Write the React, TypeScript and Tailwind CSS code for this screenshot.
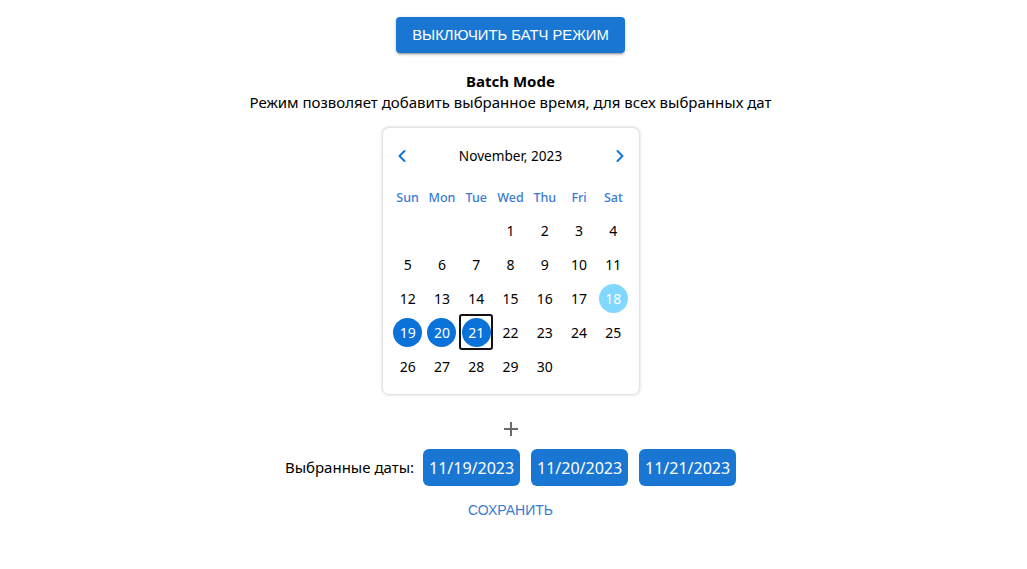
import { ChevronLeft, ChevronRight } from "lucide-react"

const weekDays = ["Sun", "Mon", "Tue", "Wed", "Thu", "Fri", "Sat"]
const selected = [19, 20, 21]
const picked = ["11/19/2023", "11/20/2023", "11/21/2023"]

const App = () => {
  // November 2023 starts on Wednesday
  const cells: (number | null)[] = [null, null, null]
  for (let d = 1; d <= 30; d++) cells.push(d)

  return (
    <div className="min-h-screen bg-white flex flex-col items-center pt-[17px] pr-[6px] text-black" style={{ fontFamily: '"Noto Sans", sans-serif' }}>
      <button
        type="button"
        className="h-9 px-4 rounded bg-[#1976d2] text-white text-[14.8px] uppercase shadow-[0_3px_1px_-2px_rgba(0,0,0,0.2),0_2px_2px_0_rgba(0,0,0,0.14),0_1px_5px_0_rgba(0,0,0,0.12)]"
        style={{ fontFamily: '"Liberation Sans", Arial, sans-serif' }}
      >
        Выключить батч режим
      </button>

      <h2 className="mt-[18px] text-[15px] font-bold leading-5">Batch Mode</h2>
      <p className="text-[15px] leading-5 mt-[1px]">Режим позволяет добавить выбранное время, для всех выбранных дат</p>

      <div className="mt-[16px] w-[256px] h-[266px] rounded-md bg-white shadow-[0_0_3px_1px_rgba(0,0,0,0.18)] px-[8px] pt-[18px]">
        <div className="flex items-center justify-between px-[1px] h-5">
          <ChevronLeft className="w-5 h-5 text-[#1976d2]" strokeWidth={2.5} />
          <span className="text-[13.6px]">November, 2023</span>
          <ChevronRight className="w-5 h-5 text-[#1976d2]" strokeWidth={2.5} />
        </div>

        <div className="grid grid-cols-7 mt-[22px]">
          {weekDays.map((w) => (
            <div key={w} className="h-5 flex items-center justify-center text-[12.5px] font-medium text-[#3a7bd5]">
              {w}
            </div>
          ))}
        </div>

        <div className="grid grid-cols-7 mt-[5px]">
          {cells.map((d, i) => (
            <div key={i} className="h-[34px] flex items-center justify-center">
              {d === null ? null : (
                <div
                  className={
                    d === 21
                      ? "w-9 h-9 rounded-[3px] border-2 border-[#111] flex items-center justify-center"
                      : "w-9 h-9 flex items-center justify-center"
                  }
                >
                  <span
                    className={
                      selected.includes(d)
                        ? "w-[29px] h-[29px] rounded-full bg-[#0b72d9] text-white flex items-center justify-center text-[14px]"
                        : d === 18
                        ? "w-[29px] h-[29px] rounded-full bg-[#80d8ff] text-white flex items-center justify-center text-[14px]"
                        : "text-[14px]"
                    }
                  >
                    {d}
                  </span>
                </div>
              )}
            </div>
          ))}
        </div>
      </div>

      <svg className="mt-[27px]" width="16" height="16" viewBox="0 0 16 16">
        <path d="M8 1v14M1 8h14" stroke="#6b6b6b" strokeWidth="2" />
      </svg>

      <div className="flex items-center mt-[12px]">
        <span className="text-[15px] mr-[9px]">Выбранные даты:</span>
        <div className="flex gap-[11px]">
          {picked.map((p) => (
            <span key={p} className="h-[37px] w-[97px] rounded-md bg-[#1976d2] text-white text-[16px] flex items-center justify-center">
              {p}
            </span>
          ))}
        </div>
      </div>

      <button
        type="button"
        className="mt-[12px] text-[14px] uppercase text-[#3a7bd5] px-2 h-6"
        style={{ fontFamily: '"Liberation Sans", Arial, sans-serif' }}
      >
        Сохранить
      </button>
    </div>
  )
}

export default App
